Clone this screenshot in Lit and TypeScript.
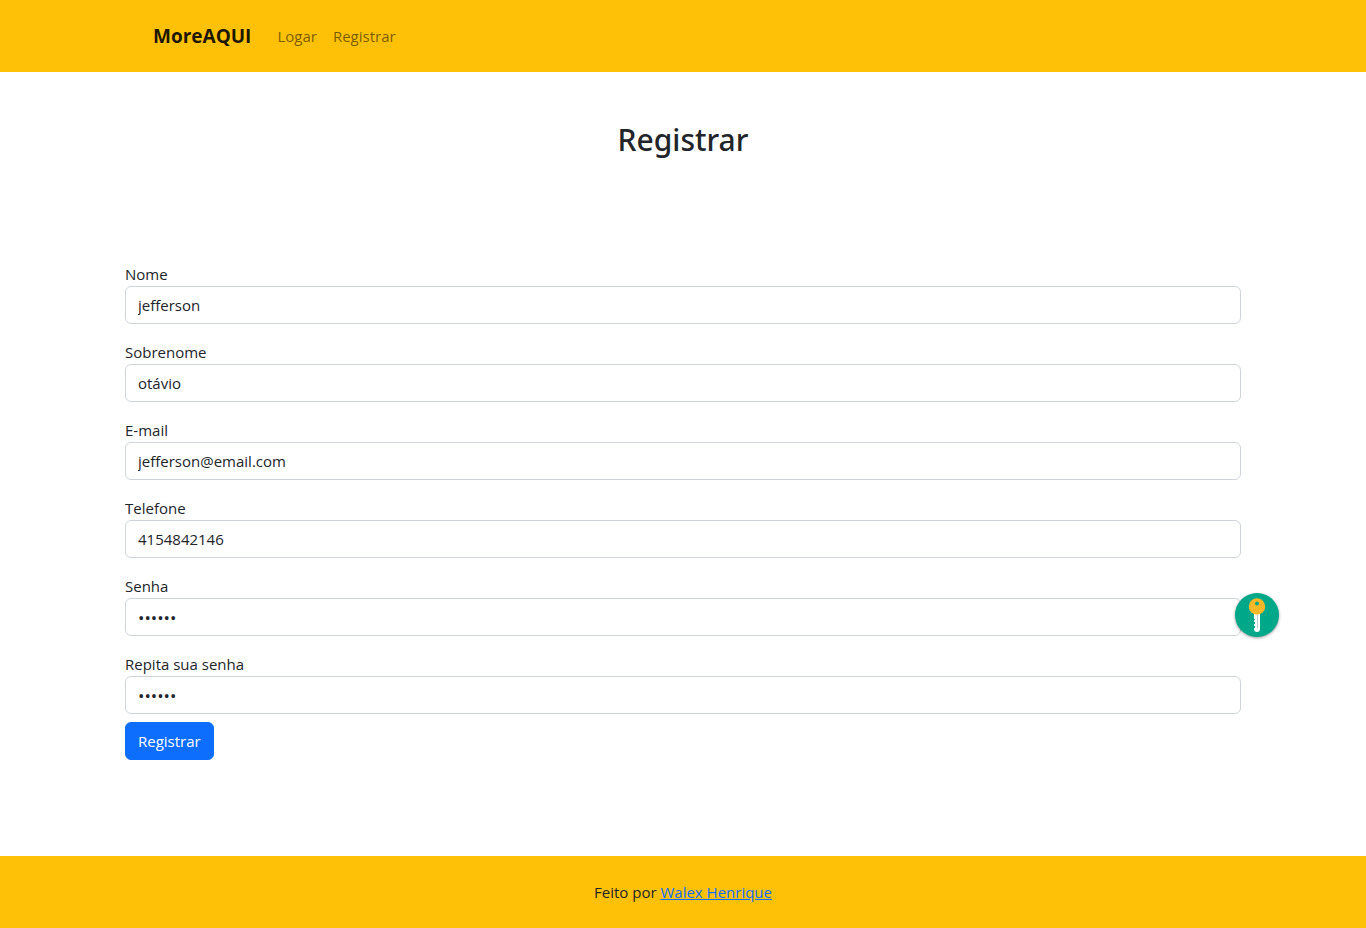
import { LitElement, html, css } from "lit";
import { customElement, state } from "lit/decorators.js";

interface Field {
  id: string;
  label: string;
  type: string;
  value: string;
  action?: boolean;
}

@customElement("app-root")
export class AppRoot extends LitElement {
  @state() private fields: Field[] = [
    { id: "nome", label: "Nome", type: "text", value: "jefferson" },
    { id: "sobrenome", label: "Sobrenome", type: "text", value: "otávio" },
    { id: "email", label: "E-mail", type: "email", value: "jefferson@email.com" },
    { id: "telefone", label: "Telefone", type: "tel", value: "4154842146" },
    { id: "senha", label: "Senha", type: "password", value: "123456", action: true },
    { id: "senha2", label: "Repita sua senha", type: "password", value: "123456" },
  ];

  static styles = css`
    * { box-sizing: border-box; }
    :host {
      display: flex;
      flex-direction: column;
      min-height: 100vh;
      font: 400 15px/24px "Open Sans", "Noto Sans", sans-serif;
      color: #212529;
      background: #fff;
    }
    .navbar { background: #ffc107; padding: 16px 0; }
    .nav-inner {
      display: flex;
      align-items: center;
      max-width: 1140px;
      margin: 0 auto;
      padding: 0 40px;
    }
    .brand {
      font-size: 19px;
      line-height: 30px;
      font-weight: 700;
      padding: 5px 0;
      margin-right: 18px;
      color: rgba(0, 0, 0, 0.9);
      text-decoration: none;
    }
    .nav-link {
      padding: 8px;
      color: rgba(0, 0, 0, 0.55);
      text-decoration: none;
    }
    .content {
      width: 100%;
      max-width: 1140px;
      margin: 0 auto;
      padding: 48px 12px;
      flex: 1;
    }
    h1 {
      margin: 0 0 102px;
      text-align: center;
      font-family: "Noto Sans", "Open Sans", sans-serif;
      font-size: 30px;
      line-height: 40px;
      font-weight: 500;
    }
    form { display: flex; flex-direction: column; gap: 16px; }
    .field { display: flex; flex-direction: column; align-items: flex-start; }
    .control { position: relative; width: 100%; }
    .input {
      display: block;
      width: 100%;
      height: 38px;
      padding: 6px 12px;
      font: inherit;
      color: #212529;
      background: #fff;
      border: 1px solid #ced4da;
      border-radius: 6px;
    }
    .input[type="password"] { font-size: 17px; }
    .submit {
      align-self: flex-start;
      margin-top: -8px;
      height: 38px;
      padding: 6px 12px;
      font: inherit;
      color: #fff;
      background: #0d6efd;
      border: 1px solid #0d6efd;
      border-radius: 6px;
    }
    .key {
      position: absolute;
      right: -38px;
      top: -5px;
      width: 44px;
      height: 44px;
      padding: 0;
      border: 0;
      border-radius: 50%;
      background: #00a88a;
      box-shadow: 0 1px 3px rgba(0, 0, 0, 0.4);
    }
    .key svg { display: block; }
    .footer { background: #ffc107; padding: 24px; text-align: center; }
    .footer a { color: #0d6efd; }
  `;

  render() {
    return html`
      <nav class="navbar">
        <div class="nav-inner">
          <a class="brand" href="#">MoreAQUI</a>
          <a class="nav-link" href="#logar">Logar</a>
          <a class="nav-link" href="#registrar">Registrar</a>
        </div>
      </nav>
      <main class="content">
        <h1>Registrar</h1>
        <form>
          ${this.fields.map((f) => html`
            <div class="field">
              <label for=${f.id}>${f.label}</label>
              <div class="control">
                <input class="input" id=${f.id} type=${f.type} .value=${f.value} />
                ${f.action ? this.keyButton() : ""}
              </div>
            </div>`)}
          <button class="submit" type="button">Registrar</button>
        </form>
      </main>
      <footer class="footer">Feito por <a href="#autor">Walex Henrique</a></footer>
    `;
  }

  private keyButton() {
    return html`<button class="key" type="button" aria-label="Gerar senha">
      <svg width="44" height="44" viewBox="0 0 44 44" aria-hidden="true">
        <path fill="#fff" d="M19 20h6v16q0 3-3 3t-3-3v-1h1v-2h-1v-2h1v-2h-1v-2h1v-1h-1z" />
        <path fill="#b5ccca" d="M22 22h1v13h-1z" />
        <circle cx="22" cy="13.5" r="8.2" fill="#fdb827" />
        <circle cx="22" cy="10.5" r="2" fill="#00a88a" />
      </svg>
    </button>`;
  }
}
